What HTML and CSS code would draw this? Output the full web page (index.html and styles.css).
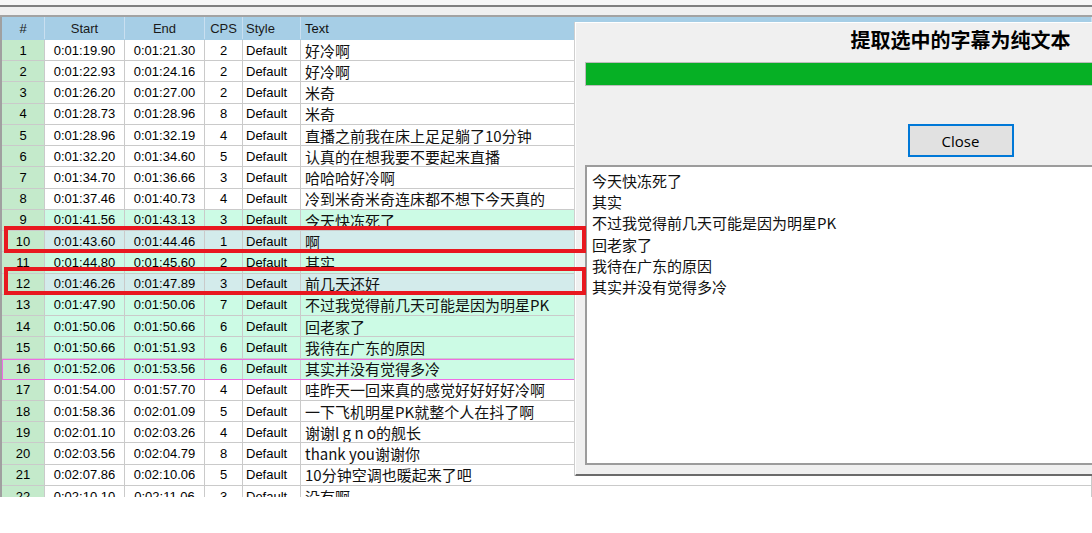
FILE: index.html
```html
<!DOCTYPE html>
<html lang="zh-CN">
<head>
    <meta charset="UTF-8">
    <title>Subtitle Grid</title>
    <link rel="stylesheet" href="styles.css">
</head>
<body>

    <div class="topbar"></div>

    <!-- Subtitle grid -->
    <div class="grid">
        <div class="row head"><span>#</span><span>Start</span><span>End</span><span>CPS</span><span class="sty">Style</span><span class="txt head-txt">Text</span></div>
        <div class="row"><span class="num">1</span><span>0:01:19.90</span><span>0:01:21.30</span><span>2</span><span class="sty">Default</span><span class="txt">好冷啊</span></div>
        <div class="row"><span class="num">2</span><span>0:01:22.93</span><span>0:01:24.16</span><span>2</span><span class="sty">Default</span><span class="txt">好冷啊</span></div>
        <div class="row"><span class="num">3</span><span>0:01:26.20</span><span>0:01:27.00</span><span>2</span><span class="sty">Default</span><span class="txt">米奇</span></div>
        <div class="row"><span class="num">4</span><span>0:01:28.73</span><span>0:01:28.96</span><span>8</span><span class="sty">Default</span><span class="txt">米奇</span></div>
        <div class="row"><span class="num">5</span><span>0:01:28.96</span><span>0:01:32.19</span><span>4</span><span class="sty">Default</span><span class="txt">直播之前我在床上足足躺了10分钟</span></div>
        <div class="row"><span class="num">6</span><span>0:01:32.20</span><span>0:01:34.60</span><span>5</span><span class="sty">Default</span><span class="txt">认真的在想我要不要起来直播</span></div>
        <div class="row"><span class="num">7</span><span>0:01:34.70</span><span>0:01:36.66</span><span>3</span><span class="sty">Default</span><span class="txt">哈哈哈好冷啊</span></div>
        <div class="row"><span class="num">8</span><span>0:01:37.46</span><span>0:01:40.73</span><span>4</span><span class="sty">Default</span><span class="txt">冷到米奇米奇连床都不想下今天真的</span></div>
        <div class="row mint"><span class="num">9</span><span>0:01:41.56</span><span>0:01:43.13</span><span>3</span><span class="sty">Default</span><span class="txt">今天快冻死了</span></div>
        <div class="row sel"><span class="num">10</span><span>0:01:43.60</span><span>0:01:44.46</span><span>1</span><span class="sty">Default</span><span class="txt">啊</span></div>
        <div class="row mint"><span class="num">11</span><span>0:01:44.80</span><span>0:01:45.60</span><span>2</span><span class="sty">Default</span><span class="txt">其实</span></div>
        <div class="row sel"><span class="num">12</span><span>0:01:46.26</span><span>0:01:47.89</span><span>3</span><span class="sty">Default</span><span class="txt">前几天还好</span></div>
        <div class="row mint"><span class="num">13</span><span>0:01:47.90</span><span>0:01:50.06</span><span>7</span><span class="sty">Default</span><span class="txt">不过我觉得前几天可能是因为明星PK</span></div>
        <div class="row mint"><span class="num">14</span><span>0:01:50.06</span><span>0:01:50.66</span><span>6</span><span class="sty">Default</span><span class="txt">回老家了</span></div>
        <div class="row mint"><span class="num">15</span><span>0:01:50.66</span><span>0:01:51.93</span><span>6</span><span class="sty">Default</span><span class="txt">我待在广东的原因</span></div>
        <div class="row mint focus"><span class="num">16</span><span>0:01:52.06</span><span>0:01:53.56</span><span>6</span><span class="sty">Default</span><span class="txt">其实并没有觉得多冷</span></div>
        <div class="row"><span class="num">17</span><span>0:01:54.00</span><span>0:01:57.70</span><span>4</span><span class="sty">Default</span><span class="txt">哇昨天一回来真的感觉好好好好冷啊</span></div>
        <div class="row"><span class="num">18</span><span>0:01:58.36</span><span>0:02:01.09</span><span>5</span><span class="sty">Default</span><span class="txt">一下飞机明星PK就整个人在抖了啊</span></div>
        <div class="row"><span class="num">19</span><span>0:02:01.10</span><span>0:02:03.26</span><span>4</span><span class="sty">Default</span><span class="txt">谢谢l g n o的舰长</span></div>
        <div class="row"><span class="num">20</span><span>0:02:03.56</span><span>0:02:04.79</span><span>8</span><span class="sty">Default</span><span class="txt">thank you谢谢你</span></div>
        <div class="row"><span class="num">21</span><span>0:02:07.86</span><span>0:02:10.06</span><span>5</span><span class="sty">Default</span><span class="txt">10分钟空调也暖起来了吧</span></div>
        <div class="row"><span class="num">22</span><span>0:02:10.10</span><span>0:02:11.06</span><span>3</span><span class="sty">Default</span><span class="txt">没有啊</span></div>
    </div>

    <!-- Extract dialog -->
    <div class="dialog">
        <h1 class="dialog-title">提取选中的字幕为纯文本</h1>
        <div class="progress"></div>
        <button class="close-button">Close</button>
        <div class="output">今天快冻死了
其实
不过我觉得前几天可能是因为明星PK
回老家了
我待在广东的原因
其实并没有觉得多冷</div>
    </div>

    <!-- Red annotation boxes -->
    <div class="mark mark-10"></div>
    <div class="mark mark-12"></div>

</body>
</html>
```

FILE: styles.css
```css
html, body {
    margin: 0;
}

body {
    position: relative;
    width: 1092px;
    height: 533px;
    overflow: hidden;
    background-color: #ffffff;
    font-family: "Liberation Sans", "Noto Sans CJK SC", sans-serif;
    font-size: 13px;
    color: #000000;
}

/* Toolbar strip above the grid */
.topbar {
    height: 17px;
    box-sizing: border-box;
    background-color: #f0f0f0;
    border-top: 5px solid #f7f7f7;
    border-bottom: 2px solid #a3a3a3;
}

.topbar::before {
    content: "";
    display: block;
    height: 2px;
    background-color: #808080;
}

/* Grid */
.grid {
    height: 480px;
    overflow: hidden;
    border-left: 2px solid #a0a0a0;
}

.row {
    display: grid;
    grid-template-columns: 43px 80px 80px 38px 58px 1fr;
    height: 21.24px;
    box-sizing: border-box;
    border-bottom: 1px solid #cacaca;
    background-color: #ffffff;
}

.row > span {
    display: flex;
    align-items: center;
    justify-content: center;
    white-space: nowrap;
    overflow: hidden;
    border-right: 1px solid #cacaca;
}

.row.head {
    height: 23px;
    background-color: #a6cee6;
    border-bottom-color: #a6cee6;
    color: #1a1a1a;
}

.row.head > span {
    border-right-color: #c9dff0;
}

.row .num {
    background-color: #c4eacb;
}

.row.head .num {
    background-color: transparent;
}

.row.mint {
    background-color: #ccfbe5;
}

.row.sel {
    background-color: #d3ebeb;
}

.row.focus {
    outline: 1px solid #ee6ee4;
    outline-offset: -1px;
}

.sty {
    justify-content: flex-start !important;
    padding-left: 3px;
}

.txt {
    justify-content: flex-start !important;
    padding-left: 4px;
    font-family: "Noto Sans CJK SC", sans-serif;
    font-size: 15px;
    color: #111111;
}

.head-txt {
    font-family: "Liberation Sans", sans-serif;
    font-size: 13px;
}

/* Dialog window */
.dialog {
    position: absolute;
    left: 575px;
    top: 22px;
    width: 770px;
    height: 454px;
    box-sizing: border-box;
    display: flex;
    flex-direction: column;
    padding: 0 9px;
    background-color: #f0f0f0;
    border-top: 1px solid #ffffff;
    border-left: 1px solid #ffffff;
    border-bottom: 2px solid #6b6b6b;
    box-shadow: -1px 0 0 #cfcfcf;
}

.dialog-title {
    margin: 0;
    padding-top: 3px;
    font-family: "Noto Sans CJK SC", sans-serif;
    font-size: 20px;
    font-weight: bold;
    line-height: 28px;
    text-align: center;
    color: #000000;
}

.progress {
    margin-top: 8px;
    height: 22px;
    border: 1px solid #bcbcbc;
    background-color: #06b025;
}

.close-button {
    align-self: center;
    margin-top: 38px;
    width: 106px;
    height: 33px;
    box-sizing: border-box;
    border: 2px solid #0078d7;
    background-color: #e1e1e1;
    font-family: "Open Sans", sans-serif;
    font-size: 15px;
    color: #000000;
    padding: 0;
}

.output {
    margin-top: 8px;
    height: 300px;
    box-sizing: border-box;
    background-color: #ffffff;
    border: 2px solid #9c9c9c;
    padding: 3px 5px;
    font-family: "Noto Sans CJK SC", sans-serif;
    font-size: 15px;
    line-height: 21.2px;
    white-space: pre-line;
    color: #111111;
}

/* Red annotation boxes */
.mark {
    position: absolute;
    left: 4px;
    width: 582px;
    box-sizing: border-box;
    border: 4px solid #e8181f;
}

.mark-10 {
    top: 226px;
    height: 27px;
}

.mark-12 {
    top: 267px;
    height: 28px;
}
```
